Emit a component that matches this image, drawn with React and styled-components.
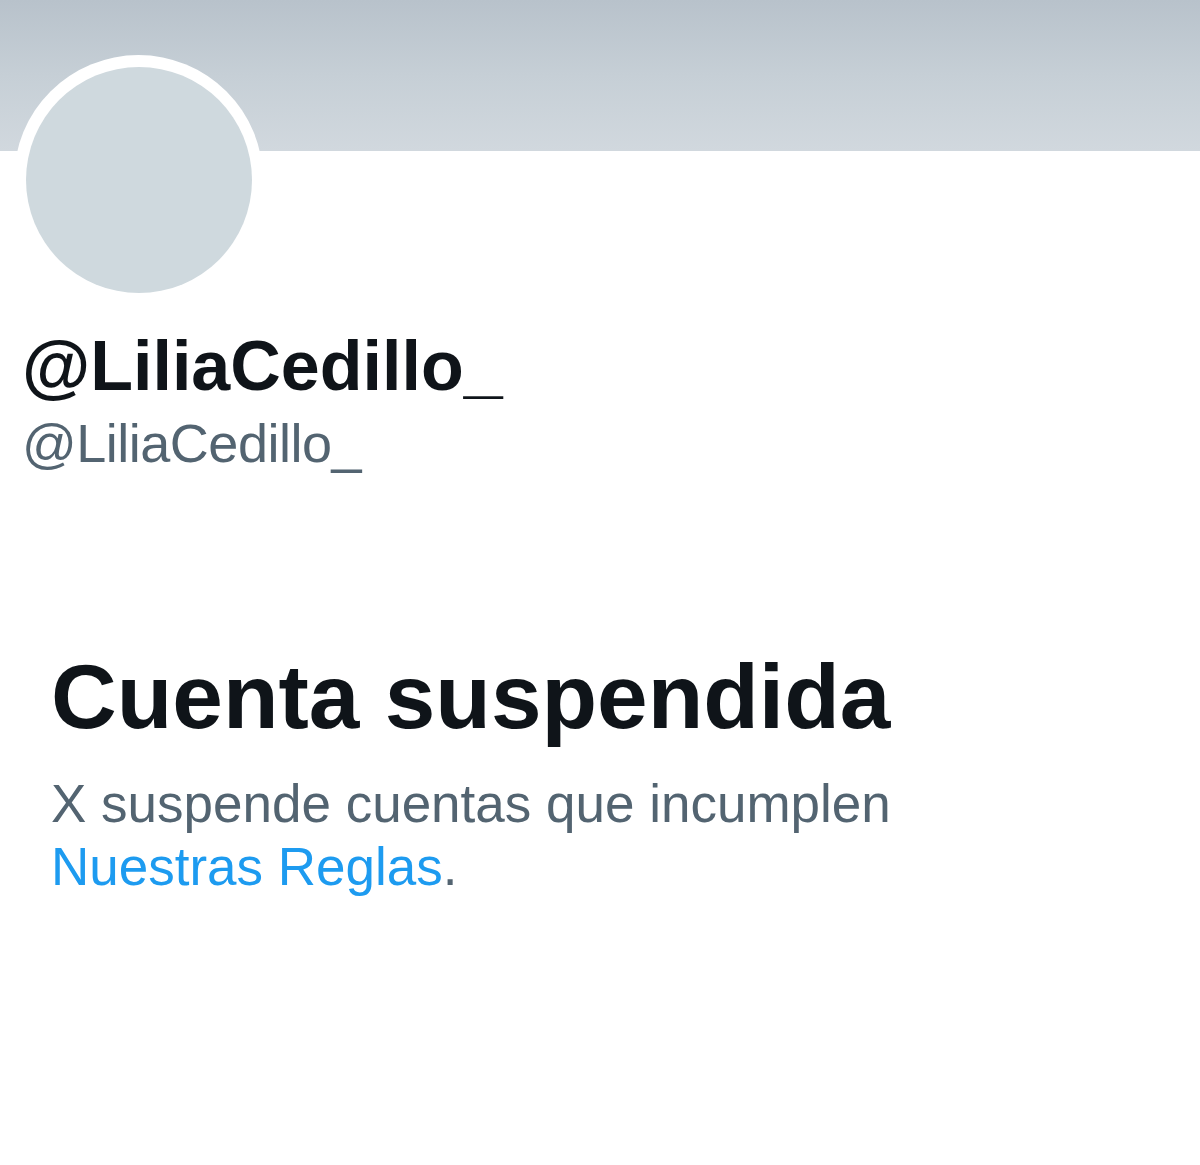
import React from "react";
import styled, { createGlobalStyle } from "styled-components";

const GlobalStyle = createGlobalStyle`
  html, body {
    margin: 0;
    padding: 0;
    background: #ffffff;
  }
  body {
    font-family: "Liberation Sans", Arial, sans-serif;
  }
`;

const Page = styled.div`
  width: 1200px;
  min-height: 1165px;
  background: #ffffff;
  overflow: hidden;
`;

const Banner = styled.div`
  height: 151px;
  background: linear-gradient(180deg, #b8c2cb 0%, #c6cfd6 50%, #d1d8de 100%);
`;

const Profile = styled.div`
  padding: 0 22px;
`;

const AvatarRing = styled.div`
  width: 249px;
  height: 249px;
  margin: -96px 0 0 -8px;
  border-radius: 50%;
  background: #ffffff;
  display: flex;
  align-items: center;
  justify-content: center;
  position: relative;
`;

const Avatar = styled.div`
  width: 226px;
  height: 226px;
  border-radius: 50%;
  background: #cfd9de;
`;

const Name = styled.h1`
  margin: 20px 0 0;
  font-size: 70px;
  line-height: 84px;
  font-weight: 700;
  color: #0f1419;
`;

const Handle = styled.div`
  margin-top: 3px;
  font-size: 54px;
  line-height: 64px;
  color: #536471;
  letter-spacing: -0.5px;
`;

const Notice = styled.section`
  padding: 170px 51px 0;
`;

const NoticeTitle = styled.h2`
  margin: 0;
  font-size: 91px;
  line-height: 104px;
  font-weight: 700;
  color: #0f1419;
`;

const NoticeText = styled.p`
  margin: 23px 0 0;
  width: 880px;
  font-size: 53px;
  line-height: 63px;
  color: #536471;
`;

const RulesLink = styled.a`
  color: #1d9bf0;
  text-decoration: none;
`;

const App = () => {
  return (
    <Page>
      <GlobalStyle />
      <Banner />
      <Profile>
        <AvatarRing>
          <Avatar />
        </AvatarRing>
        <Name>@LiliaCedillo_</Name>
        <Handle>@LiliaCedillo_</Handle>
      </Profile>
      <Notice>
        <NoticeTitle>Cuenta suspendida</NoticeTitle>
        <NoticeText>
          X suspende cuentas que incumplen{" "}
          <RulesLink href="#">Nuestras Reglas</RulesLink>.
        </NoticeText>
      </Notice>
    </Page>
  );
};

export default App;
